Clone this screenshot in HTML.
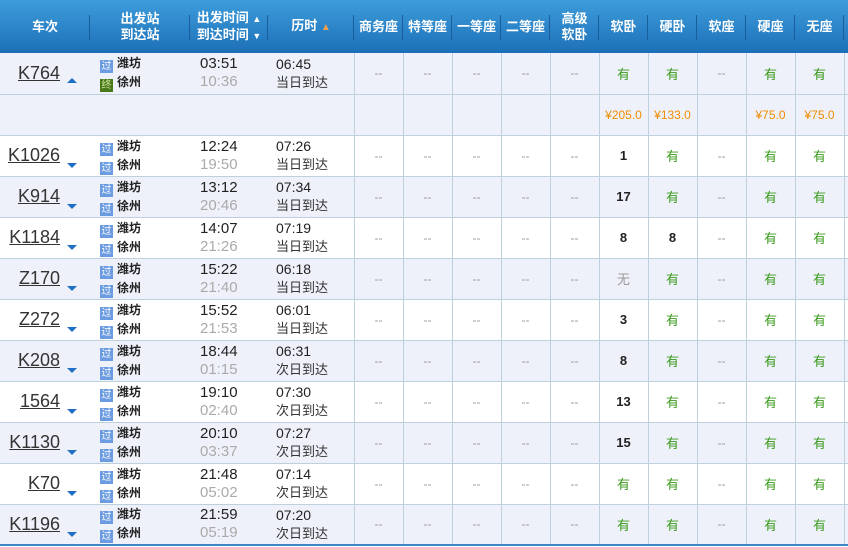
<!DOCTYPE html>
<html><head><meta charset="utf-8"><style>
*{margin:0;padding:0;box-sizing:border-box}
body{width:848px;height:547px;overflow:hidden;background:#fff;font-family:"Liberation Sans","Noto Sans CJK SC",sans-serif}
table{border-collapse:collapse;table-layout:fixed;width:848px}
th{height:53px;color:#fff;font-size:13px;font-weight:bold;line-height:16px;background:linear-gradient(#3d9cdb,#2a82c6 60%,#1c6fb6);position:relative;text-align:center}
th:after{content:"";position:absolute;right:0;top:15px;height:25px;width:1px;background:#1a5e9c}
th.l:after{display:none}
td{height:41px;border-bottom:1px solid #bcd0de;text-align:center;font-size:12px;color:#999;vertical-align:middle}
td.s{border-left:1px solid #bcd0de}
tr.a td{background:#eef1f9}
tr.b td{background:#fff}
.tn{text-align:right;padding-right:30px;position:relative}
.tn u{font-size:18px;color:#333;text-decoration:underline}
.tn i{position:absolute;left:67px;top:27px;width:0;height:0;border-left:5px solid transparent;border-right:5px solid transparent;border-top:5px solid #1f6fc2}
.tn i.up{border-top:none;border-bottom:5px solid #1f6fc2;top:25px}
.st{text-align:left;padding-left:10px;color:#222;font-weight:bold;font-size:12px;line-height:18px}
.ic{display:inline-block;width:13px;height:13px;background:#6b9be0;color:#fff;font-size:10px;line-height:13px;text-align:center;vertical-align:-2px;margin-right:4px;font-weight:normal}
.ic.g{background:#4b7a1a;color:#cde6a0}
.tm{text-align:left;padding-left:10px;font-size:15px;line-height:18px;color:#222}
.tm span{color:#aaa}
.du{text-align:left;padding-left:8px;font-size:13px;line-height:18px;color:#333}
.du b{font-size:14px;font-weight:normal;color:#222}
.y{color:#3a9a1c;font-size:13px}
.n{color:#222;font-weight:bold;font-size:13px}
.p{color:#f08c00;font-size:12px}
tr.last td{border-bottom:2px solid #3d86c4}
</style></head><body>
<table>
<colgroup><col style="width:90px"><col style="width:100px"><col style="width:78px"><col style="width:86px"><col style="width:49px"><col style="width:49px"><col style="width:49px"><col style="width:49px"><col style="width:49px"><col style="width:49px"><col style="width:49px"><col style="width:49px"><col style="width:49px"><col style="width:49px"><col style="width:4px"></colgroup>
<tr><th>车次</th><th>出发站<br>到达站</th><th>出发时间 <span style="font-size:9px">▲</span><br>到达时间 <span style="font-size:9px">▼</span></th><th>历时 <span style="color:#f0a050;font-size:10px">▲</span></th><th>商务座</th><th>特等座</th><th>一等座</th><th>二等座</th><th>高级<br>软卧</th><th>软卧</th><th>硬卧</th><th>软座</th><th>硬座</th><th>无座</th><th class="l"></th></tr>
<tr class="a"><td class="tn"><u>K764</u><i class="up"></i></td><td class="st"><span class="ic">过</span>潍坊<br><span class="ic g">终</span>徐州</td><td class="tm">03:51<br><span>10:36</span></td><td class="du"><b>06:45</b><br>当日到达</td><td class="s">--</td><td class="s">--</td><td class="s">--</td><td class="s">--</td><td class="s">--</td><td class="s y">有</td><td class="s y">有</td><td class="s">--</td><td class="s y">有</td><td class="s y">有</td><td class="s"></td></tr>
<tr class="a"><td></td><td></td><td></td><td></td><td class="s"></td><td class="s"></td><td class="s"></td><td class="s"></td><td class="s"></td><td class="s p">¥205.0</td><td class="s p">¥133.0</td><td class="s"></td><td class="s p">¥75.0</td><td class="s p">¥75.0</td><td class="s"></td></tr>
<tr class="b"><td class="tn"><u>K1026</u><i></i></td><td class="st"><span class="ic">过</span>潍坊<br><span class="ic">过</span>徐州</td><td class="tm">12:24<br><span>19:50</span></td><td class="du"><b>07:26</b><br>当日到达</td><td class="s">--</td><td class="s">--</td><td class="s">--</td><td class="s">--</td><td class="s">--</td><td class="s n">1</td><td class="s y">有</td><td class="s">--</td><td class="s y">有</td><td class="s y">有</td><td class="s"></td></tr>
<tr class="a"><td class="tn"><u>K914</u><i></i></td><td class="st"><span class="ic">过</span>潍坊<br><span class="ic">过</span>徐州</td><td class="tm">13:12<br><span>20:46</span></td><td class="du"><b>07:34</b><br>当日到达</td><td class="s">--</td><td class="s">--</td><td class="s">--</td><td class="s">--</td><td class="s">--</td><td class="s n">17</td><td class="s y">有</td><td class="s">--</td><td class="s y">有</td><td class="s y">有</td><td class="s"></td></tr>
<tr class="b"><td class="tn"><u>K1184</u><i></i></td><td class="st"><span class="ic">过</span>潍坊<br><span class="ic">过</span>徐州</td><td class="tm">14:07<br><span>21:26</span></td><td class="du"><b>07:19</b><br>当日到达</td><td class="s">--</td><td class="s">--</td><td class="s">--</td><td class="s">--</td><td class="s">--</td><td class="s n">8</td><td class="s n">8</td><td class="s">--</td><td class="s y">有</td><td class="s y">有</td><td class="s"></td></tr>
<tr class="a"><td class="tn"><u>Z170</u><i></i></td><td class="st"><span class="ic">过</span>潍坊<br><span class="ic">过</span>徐州</td><td class="tm">15:22<br><span>21:40</span></td><td class="du"><b>06:18</b><br>当日到达</td><td class="s">--</td><td class="s">--</td><td class="s">--</td><td class="s">--</td><td class="s">--</td><td class="s" style="font-size:13px">无</td><td class="s y">有</td><td class="s">--</td><td class="s y">有</td><td class="s y">有</td><td class="s"></td></tr>
<tr class="b"><td class="tn"><u>Z272</u><i></i></td><td class="st"><span class="ic">过</span>潍坊<br><span class="ic">过</span>徐州</td><td class="tm">15:52<br><span>21:53</span></td><td class="du"><b>06:01</b><br>当日到达</td><td class="s">--</td><td class="s">--</td><td class="s">--</td><td class="s">--</td><td class="s">--</td><td class="s n">3</td><td class="s y">有</td><td class="s">--</td><td class="s y">有</td><td class="s y">有</td><td class="s"></td></tr>
<tr class="a"><td class="tn"><u>K208</u><i></i></td><td class="st"><span class="ic">过</span>潍坊<br><span class="ic">过</span>徐州</td><td class="tm">18:44<br><span>01:15</span></td><td class="du"><b>06:31</b><br>次日到达</td><td class="s">--</td><td class="s">--</td><td class="s">--</td><td class="s">--</td><td class="s">--</td><td class="s n">8</td><td class="s y">有</td><td class="s">--</td><td class="s y">有</td><td class="s y">有</td><td class="s"></td></tr>
<tr class="b"><td class="tn"><u>1564</u><i></i></td><td class="st"><span class="ic">过</span>潍坊<br><span class="ic">过</span>徐州</td><td class="tm">19:10<br><span>02:40</span></td><td class="du"><b>07:30</b><br>次日到达</td><td class="s">--</td><td class="s">--</td><td class="s">--</td><td class="s">--</td><td class="s">--</td><td class="s n">13</td><td class="s y">有</td><td class="s">--</td><td class="s y">有</td><td class="s y">有</td><td class="s"></td></tr>
<tr class="a"><td class="tn"><u>K1130</u><i></i></td><td class="st"><span class="ic">过</span>潍坊<br><span class="ic">过</span>徐州</td><td class="tm">20:10<br><span>03:37</span></td><td class="du"><b>07:27</b><br>次日到达</td><td class="s">--</td><td class="s">--</td><td class="s">--</td><td class="s">--</td><td class="s">--</td><td class="s n">15</td><td class="s y">有</td><td class="s">--</td><td class="s y">有</td><td class="s y">有</td><td class="s"></td></tr>
<tr class="b"><td class="tn"><u>K70</u><i></i></td><td class="st"><span class="ic">过</span>潍坊<br><span class="ic">过</span>徐州</td><td class="tm">21:48<br><span>05:02</span></td><td class="du"><b>07:14</b><br>次日到达</td><td class="s">--</td><td class="s">--</td><td class="s">--</td><td class="s">--</td><td class="s">--</td><td class="s y">有</td><td class="s y">有</td><td class="s">--</td><td class="s y">有</td><td class="s y">有</td><td class="s"></td></tr>
<tr class="a last"><td class="tn"><u>K1196</u><i></i></td><td class="st"><span class="ic">过</span>潍坊<br><span class="ic">过</span>徐州</td><td class="tm">21:59<br><span>05:19</span></td><td class="du"><b>07:20</b><br>次日到达</td><td class="s">--</td><td class="s">--</td><td class="s">--</td><td class="s">--</td><td class="s">--</td><td class="s y">有</td><td class="s y">有</td><td class="s">--</td><td class="s y">有</td><td class="s y">有</td><td class="s"></td></tr>
</table>
</body></html>
